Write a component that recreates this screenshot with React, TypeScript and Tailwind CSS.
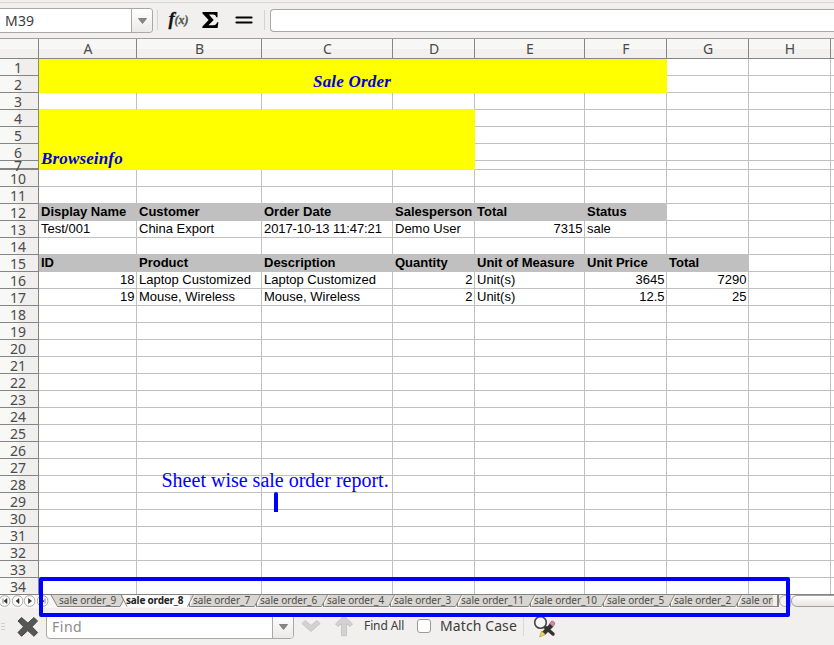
import type { ReactNode } from "react";

const UI = "font-['Noto_Sans','Open_Sans',sans-serif]";

const COLUMNS = [
  { name: "A", width: 98 },
  { name: "B", width: 125 },
  { name: "C", width: 131 },
  { name: "D", width: 82 },
  { name: "E", width: 110 },
  { name: "F", width: 82 },
  { name: "G", width: 82 },
  { name: "H", width: 82 },
  { name: "", width: 4 },
];

const ROWS = [1, 2, 3, 4, 5, 6, 7, ...Array.from({ length: 25 }, (_, i) => i + 10)];
const rowHeight = (n: number) => (n === 7 ? 9 : 17);

type Cell = { text: string; right?: boolean };
const t = (text: string): Cell => ({ text });
const r = (text: string): Cell => ({ text, right: true });

const DATA: Record<number, Cell[]> = {
  12: [t("Display Name"), t("Customer"), t("Order Date"), t("Salesperson"), t("Total"), t("Status")],
  13: [t("Test/001"), t("China Export"), t("2017-10-13 11:47:21"), t("Demo User"), r("7315"), t("sale")],
  15: [t("ID"), t("Product"), t("Description"), t("Quantity"), t("Unit of Measure"), t("Unit Price"), t("Total")],
  16: [r("18"), t("Laptop Customized"), t("Laptop Customized"), r("2"), t("Unit(s)"), r("3645"), r("7290")],
  17: [r("19"), t("Mouse, Wireless"), t("Mouse, Wireless"), r("2"), t("Unit(s)"), r("12.5"), r("25")],
};

const TABS = [
  { label: "sale order_7", width: 67 },
  { label: "sale order_6", width: 67 },
  { label: "sale order_4", width: 67 },
  { label: "sale order_3", width: 67 },
  { label: "sale order_11", width: 73 },
  { label: "sale order_10", width: 73 },
  { label: "sale order_5", width: 67 },
  { label: "sale order_2", width: 67 },
  { label: "sale ord", width: 35 },
];

function merged(row: number, col: number) {
  return (row <= 2 && col < 6) || (row >= 4 && row <= 7 && col < 4);
}

function Toolbar() {
  return (
    <div className="flex h-[38px] shrink-0 items-start bg-[#f1f0ef] pt-[2px]">
      <div className="flex h-full w-full items-start border-t border-[#d9d8d6] pt-[5px]">
        <div className="flex h-[25px] w-[153px] shrink-0 overflow-hidden rounded-r-[4px] border border-l-0 border-[#aaa8a5] bg-white">
          <div className={`${UI} w-[131px] pl-[5px] text-[14px] leading-[24px] tracking-[0.2px] text-[#3c3c3c]`}>M39</div>
          <div className="flex flex-1 items-center justify-center border-l border-[#aaa8a5] bg-linear-to-b from-white to-[#ebeae8]">
            <svg width="9" height="6" viewBox="0 0 9 6"><path d="M.5.5h8L4.5 5.5z" fill="#888" stroke="#666" strokeWidth=".7" /></svg>
          </div>
        </div>
        <div className="mt-[2px] ml-[4px] h-5 w-px bg-[#d5d3d0]" />
        <svg className="mt-[2px] ml-[8px]" width="92" height="23" viewBox="0 0 92 23">
          <g className="font-['Liberation_Serif',serif] font-bold italic">
            <text x="2.5" y="15" fontSize="18.5" fill="#111" stroke="#111" strokeWidth=".3">f</text>
            <text x="8.500" y="14" fontSize="12" fill="#55544f" stroke="#55544f" strokeWidth=".3" textLength="14">(x)</text>
          </g>
          <path d="M36.500 2h15v5.300h-1.300c-.4-2-1.200-2.800-3.300-2.800h-4l4.800 5.500-5.300 5.300h4.800c2.400 0 3.200-.9 3.900-3h1.300l-.8 5.700H36.400v-1.500l6.200-6.600L36.500 3.500z" fill="#000" />
          <path d="M70.500 7.500h15M70.500 12.500h15" stroke="#000" strokeWidth="2.200" strokeLinecap="round" />
        </svg>
        <div className="mt-[2px] ml-[6px] h-5 w-px bg-[#d5d3d0]" />
        <div className="mt-px ml-[5px] h-[23px] flex-1 rounded-l-[4px] border border-r-0 border-[#aaa8a5] bg-white" />
      </div>
    </div>
  );
}

function ColumnHeaders() {
  return (
    <div className="flex h-[21px] shrink-0 border-y border-t-[#a09f9d] border-b-[#858585] bg-linear-to-b from-[#f7f7f6] from-50% to-[#f1f0ef] to-55%">
      <div className="w-[39px] shrink-0 border-r border-[#858585]" />
      {COLUMNS.map((c, i) => (
        <div
          key={i}
          className={`${UI} shrink-0 border-r border-[#858585] pl-px text-center text-[14px] leading-[20px] text-[#4a4a4a]`}
          style={{ width: c.width }}
        >
          {c.name}
        </div>
      ))}
    </div>
  );
}

function RowHeaders() {
  return (
    <div className="w-[39px] shrink-0 bg-linear-to-r from-[#f8f8f7] from-40% to-[#f0efee] to-50%">
      {ROWS.map((n) => (
        <div
          key={n}
          className={`${UI} flex items-center justify-center border-r border-b border-[#858585] text-[14px] leading-none text-[#4a4a4a] ${n === 7 ? "border-b-2 pt-[2px]" : ""} ${n === 34 ? "border-b-0 pb-px" : ""}`}
          style={{ height: rowHeight(n) }}
        >
          <span className="mt-px pr-[2px] whitespace-nowrap">{n}</span>
        </div>
      ))}
    </div>
  );
}

function Sheet() {
  const cells: ReactNode[] = [];
  ROWS.forEach((n, ri) => {
    COLUMNS.forEach((_, ci) => {
      if (merged(n, ci)) return;
      const cell = DATA[n]?.[ci];
      const band = (n === 12 && ci < 6) || (n === 15 && ci < 7);
      const bottom = n === 3 && ci < 4 ? "border-b-[#ffff00]" : "border-b-[#c0c0c0]";
      const spacing = n === 13 && ci === 2 ? "tracking-[-0.1px]" : "";
      cells.push(
        <div
          key={`${n}-${ci}`}
          className={`border-r border-b border-r-[#c0c0c0] pr-[1.5px] pl-[2px] text-[13px] leading-[16px] whitespace-nowrap ${bottom} ${spacing} ${band ? "bg-[#c0c0c0] font-bold" : ""} ${cell?.right ? "text-right" : ""}`}
          style={{ gridRow: ri + 1, gridColumn: ci + 1 }}
        >
          {cell?.text}
        </div>,
      );
    });
  });
  return (
    <div
      className="grid shrink-0 bg-white font-['Liberation_Sans',sans-serif] text-black"
      style={{
        gridTemplateColumns: COLUMNS.map((c) => `${c.width}px`).join(" "),
        gridTemplateRows: ROWS.map((n) => `${rowHeight(n)}px`).join(" "),
      }}
    >
      <div className="col-start-1 col-end-7 row-start-1 row-end-3 flex items-end justify-center bg-[#ffff00] pr-[2px] pb-px font-['Liberation_Serif',serif] text-[17px] leading-[20px] font-bold tracking-[0.2px] text-[#0000dd] italic">
        Sale Order
      </div>
      <div className="col-start-1 col-end-5 row-start-4 row-end-8 flex items-end bg-[#ffff00] pb-px pl-[2px] font-['Liberation_Serif',serif] text-[17px] leading-[20px] font-bold tracking-[0.15px] text-[#0000dd] italic">
        Browseinfo
      </div>
      {cells}
    </div>
  );
}

function NavButton({ d }: { d: string }) {
  return (
    <svg className="shrink-0" width="12.700" height="12" viewBox="0 0 12.7 12">
      <rect x=".3" y=".7" width="10.600" height="10.600" rx="5" fill="#fbfbfa" stroke="#aaa8a5" />
      <path d={d} fill="#333" stroke="#333" strokeWidth=".6" />
    </svg>
  );
}

function SheetTabs() {
  return (
    <div className="flex h-[14px] shrink-0 overflow-hidden border-t border-[#858585] bg-[#f7f7f6]">
      <div className="-ml-px flex w-[51px] shrink-0 overflow-hidden">
        <NavButton d="M4 3.500v5M8 3.500v5L5 6z" />
        <NavButton d="M7 3.500v5L4 6z" />
        <NavButton d="M4.500 3.500v5L7.500 6z" />
        <NavButton d="M8 3.500v5M4 3.500v5L7 6z" />
      </div>
      <div className={`${UI} flex shrink-0 text-[10px] leading-[11px] text-[#4c4c4c]`}>
        <div className="relative h-[12px] w-[75px] pl-[9px]">
          <svg className="absolute inset-0" width="75" height="12" viewBox="0 0 75 12">
            <path d="M1 0h69l3.500 5-3 6.500H8z" fill="#d9d6d2" />
            <path d="M1 0l6.500 11.500H70L73.500 5 71 0" fill="none" stroke="#858380" />
          </svg>
          <span className="relative">sale order_9</span>
        </div>
        <div className="relative h-[12px] w-[65px] bg-[#fcfcfc] pl-px font-bold text-[#222]">
          <svg className="absolute top-0 -left-[4px]" width="7" height="12" viewBox="0 0 7 12">
            <path d="M0 0l6 11.500" stroke="#858380" />
          </svg>
          <span className="relative tracking-[-0.2px] whitespace-nowrap">sale order_8</span>
        </div>
        {TABS.map((tab, i) => (
          <div
            key={tab.label}
            className="relative h-[12px] border-b border-[#858380] bg-[#d9d6d2] pl-[3px] whitespace-nowrap"
            style={{ width: tab.width }}
          >
            <svg className="absolute top-0 -left-[3px]" width="8" height="12" viewBox="0 0 8 12">
              <path d="M0 12L6 0h2L3 12z" fill="#f7f7f6" />
              <path d="M.5 11.500L6.500 0M2.500 8v4" stroke="#858380" fill="none" />
            </svg>
            <div className={`relative ${i === TABS.length - 1 ? "overflow-hidden" : ""}`}>{tab.label}</div>
          </div>
        ))}
      </div>
      <div className="h-[12px] w-[6px] shrink-0 border-r-2 border-b border-[#858380] bg-[#f1f0ef]" />
      <div className="flex flex-1 overflow-hidden bg-[#f1f0ef]">
        <div className="h-[12px] w-[12px] shrink-0 rounded-l-full border border-[#b2b0ad] bg-[#f4f3f2]" />
        <div className="-mr-3 h-[12px] flex-1 rounded-l-full border border-[#a3a19e] bg-linear-to-b from-white to-[#e7e6e4]" />
      </div>
    </div>
  );
}

function FindBar() {
  return (
    <div className={`${UI} flex flex-1 items-start bg-[#f1f0ef] pt-[6px] text-[#3c3c3c]`}>
      <svg className="shrink-0" width="46" height="26" viewBox="0 0 46 26">
        <path d="M1 9.500h4M1 12.500h4M1 15.500h4" stroke="#d0cecb" />
        <path d="M21.500 3.500l6.300 5.500 6.200-5.500 3.500 3.500-5.500 5.800 5.600 5.700-3.600 3.800-6.200-5.700-6.300 5.700-3.500-3.800 5.500-5.700L18 7z" fill="#555753" stroke="#444643" strokeLinejoin="round" />
      </svg>
      <div className="flex h-[25px] w-[248px] shrink-0 overflow-hidden rounded-[4px] border border-[#aaa8a5] bg-white">
        <div className="w-[225px] pl-[5px] text-[14px] leading-[24px] tracking-[0.5px] text-[#8b8b8b]">Find</div>
        <div className="flex flex-1 items-center justify-center border-l border-[#aaa8a5] bg-linear-to-b from-white to-[#ebeae8]">
          <svg width="9" height="6" viewBox="0 0 9 6"><path d="M.5.5h8L4.500 5.500z" fill="#888" stroke="#666" strokeWidth=".7" /></svg>
        </div>
      </div>
      <svg className="shrink-0" width="70" height="24" viewBox="0 0 70 24">
        <path d="M8 9.500l3-3 6 5 6-5 3 3-9 8z" fill="#d3d2d0" stroke="#c7c6c4" strokeLinejoin="round" />
        <path d="M50 2l8.500 8-2.500 2.500-3.500-2.800v12h-5v-12L44 12.500 41.500 10z" fill="#d3d2d0" stroke="#c7c6c4" strokeLinejoin="round" />
      </svg>
      <div className="w-[53px] shrink-0 text-[12px] leading-[24px] tracking-[-0.1px] whitespace-nowrap">Find All</div>
      <div className="mt-[5px] h-[14px] w-[14px] shrink-0 rounded-[3px] border border-[#9c9a97] bg-white" />
      <div className="ml-[9px] w-[83px] shrink-0 text-[14px] leading-[24px] tracking-[0.1px] whitespace-nowrap">Match Case</div>
      <div className="mt-[2px] h-5 w-px bg-[#d9d8d6]" />
      <svg className="ml-[8px]" width="28" height="26" viewBox="0 0 28 26">
        <path d="M13 13l8 7" stroke="#333" strokeWidth="3.500" strokeLinecap="round" />
        <circle cx="8.500" cy="8.500" r="5.800" fill="#f5f5f4" stroke="#444" strokeWidth="1.600" />
        <path d="M10 18l8-8.500 3.500 3L13 21z" fill="#333" />
        <path d="M17.500 9.500l2-2.300c1-.8 4 1.500 3.200 3l-1.700 2.300z" fill="#d889a8" stroke="#8d5169" strokeWidth=".6" />
        <path d="M9.500 17L7.500 23 13.500 20.500z" fill="#edd75c" stroke="#9b8b2b" strokeWidth=".5" />
      </svg>
    </div>
  );
}

export default function App() {
  return (
    <div className="relative flex h-[645px] w-[834px] flex-col overflow-hidden bg-[#f1f0ef]">
      <Toolbar />
      <ColumnHeaders />
      <div className="flex h-[535px] shrink-0 overflow-hidden">
        <RowHeaders />
        <Sheet />
      </div>
      <SheetTabs />
      <FindBar />
      {/* Annotations drawn over the spreadsheet */}
      <div className="absolute top-[468px] left-[161.500px] font-['Liberation_Serif',serif] text-[20px] leading-[24px] whitespace-nowrap text-[#0000ff]">
        Sheet wise sale order report.
      </div>
      <div className="absolute top-[492px] left-[274px] h-[20px] w-[4px] rounded-t-sm bg-[#0000ff]" />
      <div className="absolute top-[577px] left-[39px] h-[40px] w-[751px] rounded-[2px] border-4 border-[#0000ff]" />
    </div>
  );
}
